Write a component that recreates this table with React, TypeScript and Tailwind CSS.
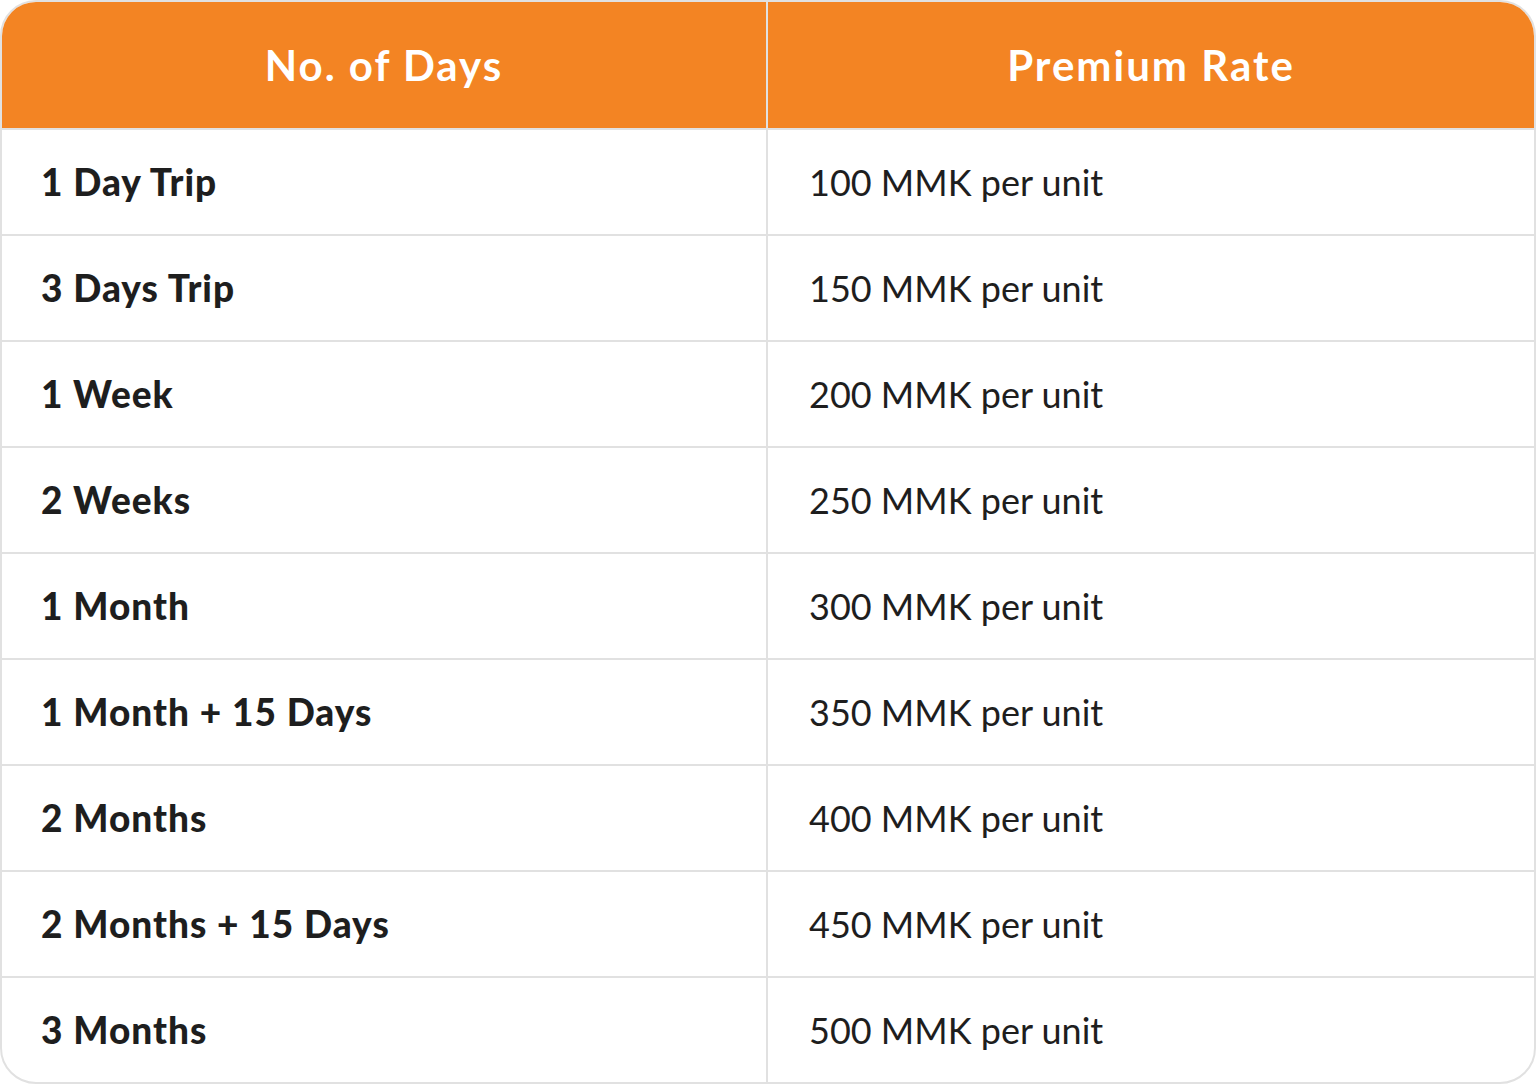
import React from "react";

const rows: [string, string][] = [
  ["1 Day Trip", "100 MMK per unit"],
  ["3 Days Trip", "150 MMK per unit"],
  ["1 Week", "200 MMK per unit"],
  ["2 Weeks", "250 MMK per unit"],
  ["1 Month", "300 MMK per unit"],
  ["1 Month + 15 Days", "350 MMK per unit"],
  ["2 Months", "400 MMK per unit"],
  ["2 Months + 15 Days", "450 MMK per unit"],
  ["3 Months", "500 MMK per unit"],
];

export default function App() {
  return (
    <div className="w-[1536px] h-[1084px] bg-white" style={{ fontFamily: "Lato, 'Noto Sans', sans-serif" }}>
      <div className="w-[1536px] h-[1084px] border-2 border-[#e1e1e1] rounded-[36px] overflow-hidden flex flex-col">
        <div className="grid grid-cols-[766px_1fr] h-[128px] bg-[#f38423] border-b-2 border-[#e1e1e1] shrink-0">
          <div className="flex items-center justify-center border-r-2 border-[#e1e1e1] text-white text-[42px] font-bold tracking-[2px]">
            No. of Days
          </div>
          <div className="flex items-center justify-center text-white text-[42px] font-bold tracking-[2px]">
            Premium Rate
          </div>
        </div>
        {rows.map(([a, b], i) => (
          <div
            key={a}
            className={
              i < rows.length - 1
                ? "grid grid-cols-[766px_1fr] h-[106px] border-b-2 border-[#e1e1e1] shrink-0"
                : "grid grid-cols-[766px_1fr] h-[104px] shrink-0"
            }
          >
            <div className="flex items-center pl-[39px] border-r-2 border-[#e1e1e1] text-[#1e1e1e] text-[37px] font-black tracking-[1px]">
              {a}
            </div>
            <div className="flex items-center pl-[41px] text-[#1e1e1e] text-[36px] font-normal tracking-[0px]">
              {b}
            </div>
          </div>
        ))}
      </div>
    </div>
  );
}
